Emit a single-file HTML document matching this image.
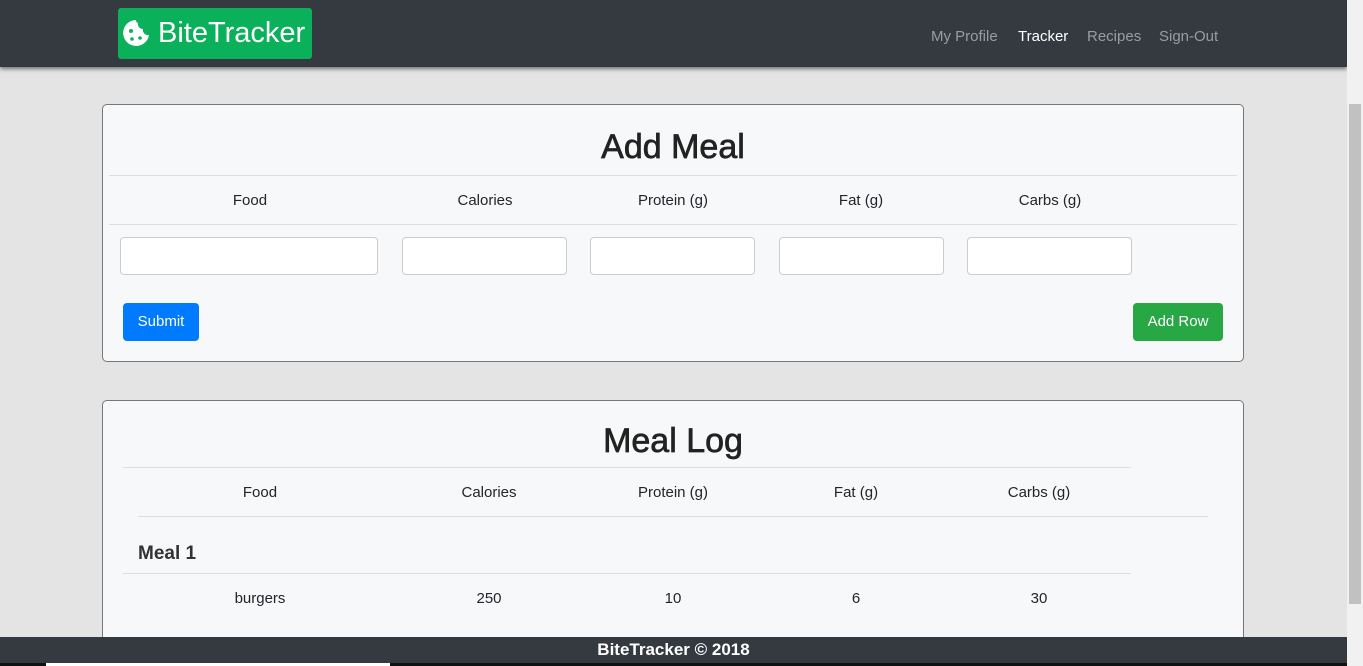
<!DOCTYPE html>
<html><head><style>
body{margin:0;width:1363px;height:666px;overflow:hidden;position:relative;font-family:"Liberation Sans",sans-serif;background:#e4e4e4;color:#212529}
.nav{position:absolute;left:0;top:0;width:1347px;height:67px;background:#343a40;box-shadow:0 2px 4px rgba(0,0,0,.5)}
.logo{position:absolute;left:118px;top:8px;width:194px;height:51px;background:#0bb05a;border-radius:3px;color:#fff;font-size:29px;line-height:51px}
.logo span{position:absolute;left:40px;top:0}
.links{position:absolute;top:28px;font-size:15px;color:#9a9da0}
.card{position:absolute;left:102px;width:1140px;background:#f7f8f9;border:1px solid #777;border-radius:5px}
h1{margin:0;position:absolute;width:100%;text-align:center;font-weight:normal;font-size:34px;color:#222;-webkit-text-stroke:0.7px #222}
.hr{position:absolute;height:1px;background:#ddd}
.c{position:absolute;font-size:15px;text-align:center;transform:translateX(-50%);white-space:nowrap}
.in{position:absolute;top:132px;height:36px;background:#fff;border:1px solid #ccc;border-radius:4px}
.btn{position:absolute;top:198px;height:38px;line-height:38px;color:#fff;font-size:15px;border-radius:4px;text-align:center}
.sb{position:absolute;left:1347px;top:0;width:16px;height:666px;background:#f1f1f1}
.foot{position:absolute;left:0;top:637px;width:1347px;height:26px;background:#343a40;color:#fff;font-weight:bold;font-size:17px;text-align:center;line-height:26px}
</style></head><body>
<div class="nav">
<div class="logo"><svg style="position:absolute;left:3px;top:10px" width="30" height="30" viewBox="0 0 30 30"><path d="M15 2 A13 13 0 1 0 28 17 A5 5 0 0 1 22 11 A5 5 0 0 1 17 5 A3 3 0 0 1 15 2Z" fill="#fff"/><circle cx="10" cy="13" r="2" fill="#0bb05a"/><circle cx="11" cy="21" r="1.8" fill="#0bb05a"/><circle cx="19" cy="20" r="1.8" fill="#0bb05a"/></svg><span>BiteTracker</span></div>
<div class="links" style="left:931px">My Profile</div>
<div class="links" style="left:1018px;color:#fff">Tracker</div>
<div class="links" style="left:1087px">Recipes</div>
<div class="links" style="left:1159px">Sign-Out</div>
</div>
<div class="card" style="top:104px;height:256px">
<h1 style="top:23px">Add Meal</h1>
<div class="hr" style="left:6px;width:1128px;top:70px"></div>
<div class="c" style="left:147px;top:87px">Food</div>
<div class="c" style="left:382px;top:87px">Calories</div>
<div class="c" style="left:570px;top:87px">Protein (g)</div>
<div class="c" style="left:758px;top:87px">Fat (g)</div>
<div class="c" style="left:947px;top:87px">Carbs (g)</div>
<div class="hr" style="left:6px;width:1128px;top:119px"></div>
<div class="in" style="left:17px;width:256px"></div>
<div class="in" style="left:299px;width:163px"></div>
<div class="in" style="left:487px;width:163px"></div>
<div class="in" style="left:676px;width:163px"></div>
<div class="in" style="left:864px;width:163px"></div>
<div class="btn" style="left:20px;width:76px;background:#007bff">Submit</div>
<div class="btn" style="left:1030px;width:90px;background:#28a745">Add Row</div>
</div>
<div class="card" style="top:400px;height:260px">
<h1 style="top:21px">Meal Log</h1>
<div class="hr" style="left:20px;width:1008px;top:66px"></div>
<div class="c" style="left:157px;top:83px">Food</div>
<div class="c" style="left:386px;top:83px">Calories</div>
<div class="c" style="left:570px;top:83px">Protein (g)</div>
<div class="c" style="left:753px;top:83px">Fat (g)</div>
<div class="c" style="left:936px;top:83px">Carbs (g)</div>
<div class="hr" style="left:35px;width:1070px;top:115px"></div>
<div style="position:absolute;left:35px;top:142px;font-size:19px;font-weight:bold;color:#333">Meal 1</div>
<div class="hr" style="left:20px;width:1008px;top:172px"></div>
<div class="c" style="left:157px;top:189px">burgers</div>
<div class="c" style="left:386px;top:189px">250</div>
<div class="c" style="left:570px;top:189px">10</div>
<div class="c" style="left:753px;top:189px">6</div>
<div class="c" style="left:936px;top:189px">30</div>
</div>
<div class="foot">BiteTracker © 2018</div>
<div style="position:absolute;left:0;top:663px;width:1347px;height:3px;background:#111"></div>
<div style="position:absolute;left:46px;top:663px;width:344px;height:3px;background:#fff"></div>
<div class="sb"><div style="position:absolute;left:2px;top:104px;width:12px;height:500px;background:#c1c1c1"></div></div>
</body></html>
